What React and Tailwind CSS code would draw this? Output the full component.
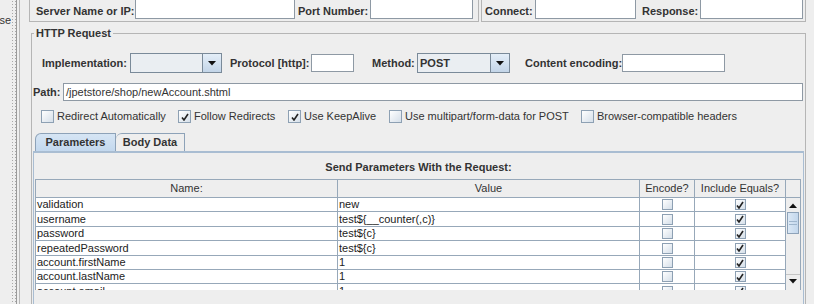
import React from 'react';

const label = 'text-[11px] font-bold text-[#333333] whitespace-nowrap leading-[13px]';

function Field({ className = '' }) {
  return <div className={`bg-white border border-[#8e99a4] ${className}`} />;
}

function Arrow({ up = false }) {
  return (
    <svg width="8" height="5" viewBox="0 0 8 5">
      <path d={up ? 'M0 5 L4 0.5 L8 5 Z' : 'M0 0 L8 0 L4 4.5 Z'} fill="#111" />
    </svg>
  );
}

function Combo({ value, className = '' }) {
  return (
    <div className={`flex h-[20px] border border-[#7a8a99] bg-[#eaeef2] ${className}`}>
      <div className="flex-1 flex items-center pl-[2px] text-[11px] font-bold text-[#333333]">{value}</div>
      <div className="w-[19px] flex items-center justify-center border-l border-[#7a8a99] bg-gradient-to-b from-[#e4eef8] to-[#c3d5e8]">
        <Arrow />
      </div>
    </div>
  );
}

function Check({ checked, size = 'w-[13px] h-[13px]' }) {
  return (
    <div className={`${size} shrink-0 flex items-center justify-center border border-[#8da0b3] bg-gradient-to-br from-white to-[#d5dfe9]`}>
      {checked && (
        <svg width="8" height="8" viewBox="0 0 8 8">
          <path d="M1 4.5 L3 7 L7 1" stroke="#222" strokeWidth="1.6" fill="none" />
        </svg>
      )}
    </div>
  );
}

const options = [
  { text: 'Redirect Automatically', checked: false, w: 'w-[137px]' },
  { text: 'Follow Redirects', checked: true, w: 'w-[110px]' },
  { text: 'Use KeepAlive', checked: true, w: 'w-[101px]' },
  { text: 'Use multipart/form-data for POST', checked: false, w: 'w-[192px]' },
  { text: 'Browser-compatible headers', checked: false, w: 'w-[200px]' },
];

const params = [
  ['validation', 'new', 'h-[14px]'],
  ['username', 'test${__counter(,c)}', 'h-[15px]'],
  ['password', 'test${c}', 'h-[14px]'],
  ['repeatedPassword', 'test${c}', 'h-[15px]'],
  ['account.firstName', '1', 'h-[14px]'],
  ['account.lastName', '1', 'h-[14px]'],
  ['account.email', '1', 'h-[15px]'],
];

const grid = 'border-[#97a8b9]';

export default function App() {
  return (
    <div className="w-[814px] h-[304px] overflow-hidden bg-[#eeeeee] flex font-['Liberation_Sans',Arial,sans-serif]">
      {/* left tree edge + splitter */}
      <div className="w-[11px] overflow-hidden flex justify-end pt-[14px] text-[11px] text-[#333333] leading-[13px]">se</div>
      <div className="w-[5px] bg-[radial-gradient(circle,#a8a8a8_0.7px,transparent_0.9px)] bg-[length:3px_3px]" />
      <div className="w-[1px] bg-[#9a9a9a]" />
      <div className="w-[2px]" />
      <div className="w-[1px] bg-[#b8b8b8]" />

      <div className="flex-1 pl-[9px]">
        {/* Web server / timeouts row (scrolled, top cut) */}
        <div className="flex h-[22px]">
          <div className="w-[450px] flex items-end pb-[2px] pl-[6px] border-l border-r border-b border-[#b5b5b5]">
            <div className="flex items-end h-[22px]">
              <span className={`${label} w-[99px] mb-[1px]`}>Server Name or IP:</span>
              <Field className="w-[160px] h-[22px]" />
              <span className={`${label} w-[72px] ml-[3px] mb-[1px]`}>Port Number:</span>
              <Field className="w-[103px] h-[22px]" />
            </div>
          </div>
          <div className="w-[325px] ml-[2px] flex items-end pb-[2px] pl-[3px] border-l border-r border-b border-[#b5b5b5]">
            <div className="flex items-end h-[22px]">
              <span className={`${label} w-[50px] mb-[1px]`}>Connect:</span>
              <Field className="w-[101px] h-[22px]" />
              <span className={`${label} w-[58px] ml-[6px] mb-[1px]`}>Response:</span>
              <Field className="w-[103px] h-[22px]" />
            </div>
          </div>
        </div>

        {/* HTTP Request group */}
        <fieldset className="ml-[2px] mt-[5px] w-[775px] h-[400px] border border-[#b5b5b5]">
          <legend className={`${label} ml-[2px] px-[2px]`}>HTTP Request</legend>

          <div className="flex items-center mt-[13px] pl-[10px] h-[20px]">
            <span className={`${label} w-[88px]`}>Implementation:</span>
            <Combo value="" className="w-[92px]" />
            <span className={`${label} w-[81px] ml-[8px]`}>Protocol [http]:</span>
            <Field className="w-[43px] h-[18px]" />
            <span className={`${label} w-[45px] ml-[18px]`}>Method:</span>
            <Combo value="POST" className="w-[93px]" />
            <span className={`${label} w-[97px] ml-[15px]`}>Content encoding:</span>
            <Field className="w-[103px] h-[18px]" />
          </div>

          <div className="flex items-center mt-[10px] pl-[1px] pr-[2px] h-[18px]">
            <span className={`${label} w-[30px]`}>Path:</span>
            <div className="flex-1 h-[18px] bg-white border border-[#8e99a4] flex items-center pl-[2px] text-[11px] text-[#333333]">
              /jpetstore/shop/newAccount.shtml
            </div>
          </div>

          <div className="flex items-center mt-[9px] pl-[9px] h-[13px]">
            {options.map((o) => (
              <div key={o.text} className={`${o.w} flex items-center gap-[3px] shrink-0`}>
                <Check checked={o.checked} />
                <span className="text-[11px] text-[#333333] whitespace-nowrap leading-[13px]">{o.text}</span>
              </div>
            ))}
          </div>

          {/* tabs */}
          <div className="flex items-end mt-[10px] pl-[3px] h-[18px]">
            <div className="w-[81px] h-[18px] flex items-center justify-center rounded-tl-[6px] border-t border-l border-r border-[#8da2b8] bg-gradient-to-b from-[#d6e5f4] to-[#c3d8ee] text-[11px] font-bold text-[#333333]">
              Parameters
            </div>
            <div className="w-[69px] h-[18px] flex items-center justify-center rounded-tl-[6px] border-t border-r border-[#8da2b8] bg-[#eeeeee] text-[11px] font-bold text-[#333333]">
              Body Data
            </div>
          </div>

          <div className="ml-[1px] mr-[1px] border-t-2 border-l border-r border-[#a9bdd2] h-[200px]">
            <div className="pt-[8px] h-[26px] text-center text-[11px] font-bold text-[#333333] leading-[13px]">
              Send Parameters With the Request:
            </div>

            <div className="ml-[1px] flex">
              <div className="w-[751px]">
                <div className={`flex h-[19px] border-t border-b ${grid} text-[11px] text-[#333333]`}>
                  <div className={`w-[303px] border-l border-r ${grid} flex items-center justify-center`}>Name:</div>
                  <div className={`w-[302px] border-r ${grid} flex items-center justify-center`}>Value</div>
                  <div className={`w-[55px] border-r ${grid} flex items-center justify-center`}>Encode?</div>
                  <div className={`w-[91px] border-r ${grid} flex items-center justify-center whitespace-nowrap`}>Include Equals?</div>
                </div>
                <div className="h-[92px] overflow-hidden">
                  {params.map(([name, value, h]) => (
                    <div key={name} className={`flex ${h} border-b ${grid} bg-white text-[11px] text-[#222222] leading-[13px]`}>
                      <div className={`w-[303px] border-l border-r ${grid} pl-[1px] flex items-center`}>{name}</div>
                      <div className={`w-[302px] border-r ${grid} pl-[1px] flex items-center`}>{value}</div>
                      <div className={`w-[55px] border-r ${grid} flex items-center justify-center`}>
                        <Check checked={false} size="w-[11px] h-[11px]" />
                      </div>
                      <div className={`w-[91px] border-r ${grid} flex items-center justify-center`}>
                        <Check checked size="w-[11px] h-[11px]" />
                      </div>
                    </div>
                  ))}
                </div>
              </div>

              {/* scrollbar */}
              <div className="w-[15px] flex flex-col">
                <div className={`h-[19px] border-t border-b border-r ${grid}`} />
                <div className={`h-[92px] border-r ${grid} flex flex-col bg-[#eeeeee]`}>
                  <div className="h-[14px] flex items-center justify-center">
                    <Arrow up />
                  </div>
                  <div className="h-[22px] mx-[1px] border border-[#8da2b8] bg-gradient-to-r from-[#dbe8f5] to-[#c3d7ec] flex flex-col items-center justify-center gap-[2px]">
                    <div className="w-[8px] h-[1px] bg-[#9fb6cd]" />
                    <div className="w-[8px] h-[1px] bg-[#9fb6cd]" />
                  </div>
                  <div className="flex-1" />
                  <div className="h-[14px] flex items-center justify-center border-t border-[#c5c5c5]">
                    <Arrow />
                  </div>
                  <div className="h-[2px]" />
                </div>
              </div>
            </div>
          </div>
        </fieldset>
      </div>
    </div>
  );
}
